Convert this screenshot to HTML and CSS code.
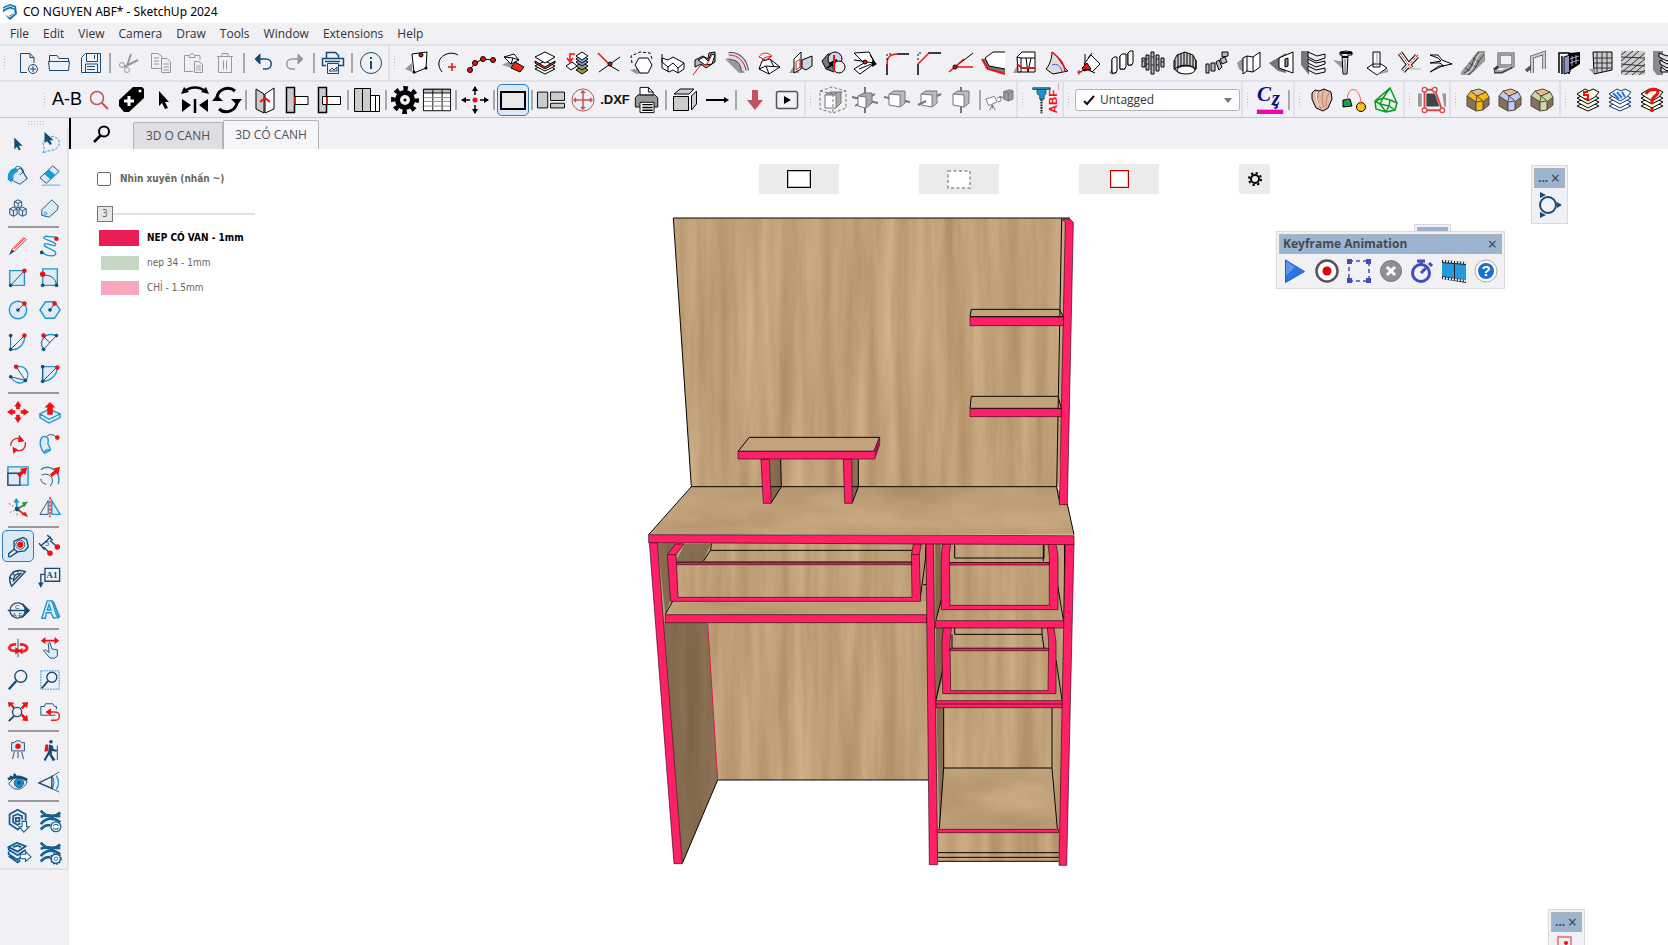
FILE: index.html
```html
<!DOCTYPE html>
<html lang="en">
<head>
<meta charset="utf-8">
<title>CO NGUYEN ABF* - SketchUp 2024</title>
<link rel="stylesheet" href="styles.css">
</head>
<body>
<header class="titlebar">
  <svg class="logo" viewBox="0 0 16 16"><path d="M8 0 14 2l1 8-7 6-5-5 4 1 5-3V6L8 5 1 8V3z" fill="#1273b5"/><path d="M1 5l7-3 5 2M3 7l5-2 4 1v4M3 11l5 2 5-4M8 6v3" stroke="#d5ecfa" stroke-width="1"/></svg>
  <h1>CO NGUYEN ABF* - SketchUp 2024</h1>
</header>
<nav class="menubar">
  <a href="#">File</a><a href="#">Edit</a><a href="#">View</a><a href="#">Camera</a><a href="#">Draw</a><a href="#">Tools</a><a href="#">Window</a><a href="#">Extensions</a><a href="#">Help</a>
</nav>

<div class="row">
  <div class="bar navy"><i class="grip"></i>
    <button aria-label="New"><svg viewBox="0 0 24 24"><path d="M12 21.500H5.500v-19H15l4 4V12M15 2.500v4h4"/><circle cx="18" cy="18" r="4.500"/><path d="M18 15v6M15 18h6"/></svg></button>
    <button aria-label="Open"><svg viewBox="0 0 24 24"><path d="M2.500 10V4.500H10l2 3h9.500V10M1.500 10.500h21l-1 9h-19z"/></svg></button>
    <button aria-label="Save"><svg viewBox="0 0 24 24"><path d="M2.500 6.500l4-4h15v19h-19zM7.500 2.500v8h11v-8M15.500 4v4M6.500 21v-8h12v8M8 15.500h8M8 18.500h8"/></svg></button>
    <i class="sep"></i>
    <button class="dim" aria-label="Cut"><svg viewBox="0 0 24 24"><path d="M14 3l-4 12M21 9L7 16" stroke-width="2"/><circle cx="5" cy="14" r="2.500"/><circle cx="10" cy="19" r="2.500"/></svg></button>
    <button class="dim" aria-label="Copy"><svg viewBox="0 0 24 24"><path d="M12 17.500H2.500v-15H9l4 3V8M12.500 21.500v-14H18l3.500 3.500v10.500zM5 7h5M5 10h5M5 13h5M14.500 13H20M14.500 16H20M14.500 19H20"/></svg></button>
    <button class="dim" aria-label="Paste"><svg viewBox="0 0 24 24"><path d="M12 20.500H3.500v-16H8M14 4.500h5V9M8 6.500v-2l3-2 3 2v2zM13.500 21.500v-11H18l3.500 3v8z"/><path d="M15 14h5v6h-5z" fill="#ccccd4" stroke="none"/></svg></button>
    <button class="dim" aria-label="Delete"><svg viewBox="0 0 24 24"><path d="M4 5.500h16M9 5V2.500h6V5M5.500 6v15.500h13V6M10.500 9.500v9M13.500 9.500v9"/></svg></button>
    <i class="sep"></i>
    <button aria-label="Undo"><svg viewBox="0 0 24 24"><path d="M6 8h9c7 0 7 10 0 10h-3" stroke-width="1.500"/><path d="M4 8l5-5v10z" fill="#174b76"/></svg></button>
    <button class="dim" aria-label="Redo"><svg viewBox="0 0 24 24"><path d="M18 8H9c-7 0-7 10 0 10h3" stroke-width="1.500"/><path d="M20 8l-5-5v10z" fill="#999"/></svg></button>
    <i class="sep"></i>
    <button aria-label="Print"><svg viewBox="0 0 24 24"><path d="M5 14.500H1.500V7.500h21v7H18M5.500 7V1.500h9l3 3V7M4 10.500h15" stroke-width="1.500"/><path d="M6.500 12.500h11v10h-11zM8 20l3-3 2 2 3-3v4z"/></svg></button>
    <i class="sep"></i>
    <button aria-label="Model info"><svg viewBox="0 0 24 24"><circle cx="12" cy="12" r="10.500"/><path d="M12 10v8M12 6v2" stroke-width="2"/></svg></button>
  </div>
  <div class="bar ink"><i class="grip"></i>
    <button aria-label="Face tool"><svg viewBox="0 0 24 24"><path class="s" d="M0 18l7-6v9z"/><path class="w" d="M7 3l15-2-1 16-12 5z"/><circle cx="16" cy="4" r="2" class="rf"/><circle cx="9" cy="21" r="1.500" class="kf"/><circle cx="21" cy="17" r="1.500" class="kf"/></svg></button>
    <button aria-label="Arc centre"><svg viewBox="0 0 24 24"><path d="M21 4C11-2 -5 8 5 21"/><path class="r" d="M15 12v8M11 16h8" stroke-width="1.500"/></svg></button>
    <button class="wide" aria-label="Polyline"><svg viewBox="0 0 28 24"><path d="M2 20l6-8 8-4 10 1"/><g class="rf"><circle cx="3" cy="19" r="2.500"/><circle cx="8" cy="12" r="2.500"/><circle cx="16" cy="8" r="2.500"/><circle cx="26" cy="9" r="2.500"/></g></svg></button>
    <button aria-label="Split solid"><svg viewBox="0 0 24 24"><path class="s" d="M1 14l8-4 8 9z"/><path class="w" d="M3 6l10-3 5 6-8 4z"/><path d="M3 6l9 1 6 2M12 7l-2 6"/><path d="M10 17l4-6 9 5-4 5z" fill="#f52a12"/></svg></button>
    <button aria-label="Layers"><svg viewBox="0 0 24 24"><path class="w" d="M2 18l10-5 10 5-10 5z"/><path class="w" d="M2 15l10-5 10 5-10 5z"/><path d="M2 10l10 6 10-6v2l-10 6-10-6z" fill="#f33"/><path class="w" d="M12 1l10 5-10 6L2 6z"/></svg></button>
    <button aria-label="Move layers"><svg viewBox="0 0 24 24"><path d="M11 19l6-4 6 4-6 4z" fill="#b18c52"/><path d="M11 15l6-4 6 4-6 4z" fill="#75b375"/><path d="M11 11l6-4 6 4-6 4z" fill="#b98be0"/><path d="M11 8l6-4 6 4-6 4z" fill="#65c9ed"/><path class="w" d="M11 5l6-4 6 4-6 4zM1 15l6-4 5 4-6 4z"/><path class="r" d="M10 3H5v6M2 7l3 4 3-4" stroke-width="1.500"/></svg></button>
    <button aria-label="Intersect"><svg viewBox="0 0 24 24"><path class="r" d="M1 2l12 12" stroke-width="1.500"/><path d="M2 21L23 6M12 14l10 6"/><circle class="rf" cx="13" cy="13" r="2"/></svg></button>
    <button aria-label="Hexagon"><svg viewBox="0 0 24 24"><path class="s" d="M1 19l9-2 6 5-9 1z"/><path class="w" d="M10 7h9l4 7-4 8h-8l-5-8z"/><path d="M3 12L2 5l9-4 10 1 2 6" stroke-dasharray="3 2"/></svg></button>
    <button aria-label="Extrude face"><svg viewBox="0 0 24 24"><path class="w" d="M1 7l6 2 5-3 11 6v6l-6 4-5-3-4 2-7-4z"/><path d="M1 11l6 5 5-4 5 5 6-5M1 3v8M7 16v5M17 17v5"/></svg></button>
    <button aria-label="Extrude path"><svg viewBox="0 0 24 24"><path fill="#bbb" d="M2 16V9l8-4 5 3 1-6 6-1v10l-9 6-5-4z"/><path class="w" d="M5 9l6-3 4 4 3-7 4 1-3 9-7 1-4-3z"/><path class="r" d="M0 24l7-9 7-2 5-9"/></svg></button>
    <button aria-label="Pipe"><svg viewBox="0 0 24 24"><path class="s" d="M0 8l8-2 12 16h-6z"/><path d="M4 5c9-1 15 6 16 15" stroke="#555" stroke-width="8"/><path d="M4 5c9-1 15 6 16 15" stroke="#ddd" stroke-width="6"/><path d="M4 4c10 0 15 7 17 15" stroke="#e08"/></svg></button>
    <button aria-label="Dome"><svg viewBox="0 0 24 24"><path class="w" d="M2 18l3-8 8-2 10 8-11 7z"/><path d="M2 18l7-3 14 1M9 15l3 8M13 8l4 8"/><path class="r" d="M2 6c3-5 9-5 13-1L9 9zM5 9c3-4 8-3 10-4"/></svg></button>
    <button aria-label="Project to face"><svg viewBox="0 0 24 24"><path class="s" d="M0 22h10V8z"/><path class="w" d="M5 8l7-7v17l-7 4z"/><path class="r" d="M7 11l4-3v8l-4 3z"/><path d="M13 9l10-4v10l-6 4-4-2z" fill="#ccd6dc"/></svg></button>
    <button aria-label="Boolean"><svg viewBox="0 0 24 24"><path d="M1 10l6-7h6v18l-8-3z" fill="#777"/><circle cx="14" cy="8" r="7" fill="#cdd8e8"/><circle cx="18" cy="16" r="6" fill="#eee"/><path d="M8 13l8-4M6 17l8-5" stroke-width="2"/><path class="r" d="M13 4v17" stroke-width="2"/></svg></button>
    <button aria-label="Convert face"><svg viewBox="0 0 24 24"><path class="w" d="M1 2l15-1 6 11L7 23 1 18l10-6z"/><path d="M1 9l20 3L6 18M17 4l5 8"/><circle class="rf" cx="12" cy="11" r="2"/><path class="kf" d="M19 9l5 4-5 3z"/></svg></button>
    <button aria-label="Fillet"><svg viewBox="0 0 24 24"><path d="M2 24V13M12 3h12" stroke-width="1.500"/><path class="r" d="M2 14C2 7 4 3 13 3" stroke-width="1.500"/><path d="M2 9V3h5" stroke-dasharray="2 2"/></svg></button>
    <button aria-label="Chamfer"><svg viewBox="0 0 24 24"><path d="M1 24V13M11 2h13" stroke-width="1.500"/><path class="r" d="M1 13L12 2" stroke-width="1.500"/><path d="M1 9V2h5" stroke-dasharray="2 2"/></svg></button>
    <button aria-label="Angle"><svg viewBox="0 0 24 24"><path d="M6 16L24 2"/><path class="r" d="M0 21l6-5h18M6 16l9-8" stroke-width="1.500"/><circle class="rf" cx="6" cy="16" r="2"/></svg></button>
    <button aria-label="Edge profile"><svg viewBox="0 0 24 24"><path d="M1 8l4 10 19 4v-6L5 8z" fill="#777" stroke="none"/><path class="w" d="M24 1H12L4 7l4 8 16 3"/><path class="r" d="M1 8l6 10 17 5" stroke-width="2"/></svg></button>
    <button aria-label="Loft"><svg viewBox="0 0 24 24"><path class="s" d="M0 22h7V9z"/><path class="w" d="M4 6l5-5h13v20H5z"/><path d="M8 7h14M8 7v14M13 7l2 14M18 7l-3 14M4 6l4 1"/><path class="r" d="M4 13l5 4h13" stroke-width="2"/></svg></button>
    <button aria-label="Curve surface"><svg viewBox="0 0 24 24"><path d="M7 1C7 8 4 15 1 18l7 5 15-3C17 15 15 7 7 1z" fill="#ddd"/><path class="r" d="M7 1c6 5 12 10 13 19" stroke-width="1.500"/><path d="M7 14c5-2 9 1 10 7" stroke="#35f"/></svg></button>
    <button aria-label="Rotate rectangle"><svg viewBox="0 0 24 24"><path class="w" d="M7 13l7-9 9 9-8 8z"/><path class="rf" d="M5 17l5-5 4 6-7 2z"/><path d="M8 3v10M1 22l8-4 9 4M11 7l4-5"/><path class="r" d="M2 19v5M0 21h5"/></svg></button>
    <button aria-label="Array line"><svg viewBox="0 0 24 24"><path class="s" d="M0 22l4-6v8z"/><path fill="#bbb" d="M3 8h4v14H3zM11 5h5v13h-5zM19 2h4v12h-4z"/><path class="w" d="M3 8l2-2h3v14l-2 2H3zM11 5l2-2h4v13l-2 2h-4zM19 2l2-2h3v12l-2 2h-3z"/></svg></button>
    <button aria-label="Array grid"><svg viewBox="0 0 24 24"><path fill="#bbb" d="M1 7h3v9H1zM5 4h3v15H5zM10 1h3v22h-3zM15 4h3v16h-3zM20 7h3v9h-3z"/><path d="M1 10h2M5 8h3M5 13h3M10 6h3M10 14h3M15 8h3M15 14h3M20 11h3" stroke="#222"/></svg></button>
    <button aria-label="Array circle"><svg viewBox="0 0 24 24"><path fill="#ccc" d="M1 10l3-6 8-3 8 3 3 6v8l-5 4H6l-5-4z"/><path d="M2 9v9M5 4v13M8 3v13M11 1v13M14 2v13M17 3v14M20 5v12M23 9v9M2 18c4-5 16-5 21 0"/><ellipse class="w" cx="13" cy="19" rx="9" ry="4"/></svg></button>
    <button aria-label="Array path"><svg viewBox="0 0 24 24"><path fill="#bbb" d="M1 13h3v9H1zM6 12h4v8H6zM11 11l3-2 3 7-3 3zM15 8l5-2 2 5-5 2zM17 1h6v4l-6 1z"/></svg></button>
    <button aria-label="Fold"><svg viewBox="0 0 24 24"><path class="s" d="M0 12l8-7v17l-6-4z"/><path class="w" d="M6 7l4-2 6 1 7-5v15l-7 5-6-1-4 3z"/><path d="M10 5v15M16 6v15"/></svg></button>
    <button aria-label="Opening"><svg viewBox="0 0 24 24"><path fill="#777" stroke="none" d="M0 12L17 2v20l-8-2z"/><path class="w" d="M10 7l14-6v21l-14-5z"/><path fill="#888" d="M16 8l3-1v8l-3 1z"/></svg></button>
    <button aria-label="Shutter"><svg viewBox="0 0 24 24"><path fill="#777" stroke="none" d="M0 0h8v24L0 14z"/><path fill="#eee" d="M7 1l9 4 8-2v4l-9 3-8-4zM7 8l8 4 9-2v3l-9 3-8-4zM7 15l8 4 9-2v4l-9 2-8-4z"/></svg></button>
    <button aria-label="Screw"><svg viewBox="0 0 24 24"><path class="s" d="M0 9l13 2v10z"/><path d="M7 1l6-1 6 1v3h-4l-1 19h-4L9 4H7z" fill="#ddd"/><path d="M7 2h12M9 6h6" stroke-width="2"/><path d="M12 8v14" stroke="#777"/></svg></button>
    <button aria-label="Column"><svg viewBox="0 0 24 24"><path class="w" d="M2 17l6-4h8l6 4-10 7zM8 1h7v15H8z"/><path class="s" d="M1 19l10 5 12-6v3l-12 3z"/><path d="M12 2v14" stroke="#999"/></svg></button>
    <button aria-label="Crossing pipes"><svg viewBox="0 0 24 24"><path d="M3 2l11 15M20 5L6 20" stroke-width="5"/><path d="M3 2l11 15M20 5L6 20" stroke="#fff" stroke-width="3"/><path class="r" d="M3 2l11 15M21 4L6 20" stroke-dasharray="3 1"/><path d="M13 18h11" stroke="#aaa"/></svg></button>
    <button aria-label="Polyline fold"><svg viewBox="0 0 24 24"><path class="w" d="M1 4h8l4 5 10 4-10 2-12 6 9-6h5l-4-3H1l11-2-3-3z"/></svg></button>
    <button aria-label="Rail"><svg viewBox="0 0 24 24"><path fill="#999" stroke="none" d="M0 21L17 0h7v10L9 24H0z"/><path d="M3 22C13 18 11 6 18 1M7 24C17 18 16 9 23 4M4 17l5 3M8 12l7 4M12 7l6 4" stroke="#444"/><path d="M5 23C15 18 13 7 20 2" stroke="#eee"/></svg></button>
    <button aria-label="Frame"><svg viewBox="0 0 24 24"><path d="M6 3h14v12H6zM1 19l5-4M1 21h8l10-5" stroke="#444" stroke-width="3"/><path d="M6 3h14v12H6zM2 20h6l9-4" stroke="#bbb" stroke-width="1.500"/></svg></button>
    <button aria-label="Arch"><svg viewBox="0 0 24 24"><path d="M7 22V6l12-4v16M1 20l6-5" stroke="#555" stroke-width="3.500"/><path d="M7 22V6l12-4v16" stroke="#ccc" stroke-width="2"/></svg></button>
    <button aria-label="Panels"><svg viewBox="0 0 24 24"><path d="M2 22V2h10v21M5 5v18" stroke-width="1.500"/><path d="M7 6l6-2v17l-6 2z" fill="#8998c0"/><path class="kf" d="M12 2l11-1v12l-11 7z"/><path d="M15 5v10M19 4v9M13 8l9-3M13 12l9-3" stroke="#aac"/></svg></button>
    <button aria-label="Lattice"><svg viewBox="0 0 24 24"><path fill="#ccc" d="M4 1h19v18L5 23z"/><path d="M8 1v21M13 1v20M18 1v19M4 7h19M4 12h19M4 17h19" stroke="#333"/><path class="s" d="M0 18h5v5z"/></svg></button>
    <button aria-label="Roof tiles"><svg viewBox="0 0 24 24"><path fill="#ccc" stroke="none" d="M0 0h24v24H0z"/><path d="M0 4l5-4M0 10L12 0M0 16L18 0M0 22L24 2M4 24L24 8M11 24l13-11M18 24l6-5M0 6l24 1M0 13l24 2M0 20l24 1" stroke="#333"/></svg></button>
    <button aria-label="Rope"><svg viewBox="0 0 24 24"><path fill="#888" stroke="none" d="M0 0h10v24H4l-4-5z"/><path fill="#ddd" d="M6 2l8 3 6-4v5l-6 4-8-4zM7 9l7 4 6-4v4l-6 4-7-4zM8 16l6 4 6-4v5H8z"/></svg></button>
  </div>
</div>

<div class="row second">
  <div class="bar ink"><i class="grip"></i>
    <button class="ab" aria-label="A-B">A-B</button>
    <button aria-label="Search"><svg viewBox="0 0 24 24"><circle cx="10" cy="10" r="6.500" stroke="#c0545a" stroke-width="1.500"/><path d="M15 15l6 6" stroke="#c0545a" stroke-width="2"/></svg></button>
    <button class="big" aria-label="Tag"><svg viewBox="0 0 28 28"><path class="kf" d="M2 14L16 1h9l2 2v9L12 26H7l-5-6z"/><circle cx="23" cy="5" r="2" fill="#fff"/><path d="M12 10v10M7 15h10" stroke="#fff" stroke-width="3"/></svg></button>
    <button aria-label="Select"><svg viewBox="0 0 24 24"><path class="kf" d="M8 3v15l3-3 3 6 3-1-3-6h4z"/></svg></button>
    <button class="big" aria-label="Mirror"><svg viewBox="0 0 28 28"><path class="kf" d="M1 13l9 6-9 7zM27 13l-9 6 9 7z"/><path d="M14 13v14M3 6c6-6 16-6 22 0" stroke-width="2.500"/><path class="kf" d="M0 8l3-7 5 5zM28 8l-3-7-5 5z"/></svg></button>
    <button class="big" aria-label="Rotate"><svg viewBox="0 0 28 28"><path d="M4 11a11 11 0 0 1 18-6M24 17a11 11 0 0 1-18 6" stroke-width="3"/><path class="kf" d="M-1 15l5-6 6 6zM18 13l6 6 5-6z"/></svg></button>
    <i class="sep"></i>
    <button class="big" aria-label="Book"><svg viewBox="0 0 28 28"><path fill="#ccc" d="M5 3l8 5v19l-8-4z"/><path class="w" d="M23 2l-9 6v19l9-4z"/><path class="r" d="M9 16l5-4 5 4" stroke-width="2"/></svg></button>
    <button class="big" aria-label="Joint left"><svg viewBox="0 0 28 28"><path fill="#ccc" d="M3.500 1.500h8v25h-8z" stroke-width="1.500"/><path class="w" d="M12 10.500h13v8H12z"/><path class="r" d="M12 11v7" stroke-width="2"/></svg></button>
    <button class="big" aria-label="Joint through"><svg viewBox="0 0 28 28"><path fill="#ccc" d="M3.500 1.500h8v25h-8z" stroke-width="1.500"/><path class="w" d="M7.500 10.500h18v8h-18z"/><path class="r" d="M12 11v7" stroke-width="2"/></svg></button>
    <i class="sep"></i>
    <button class="big" aria-label="Panels list"><svg viewBox="0 0 28 28"><path fill="#ccc" d="M1.500 2.500h8v23h-8zM9.500 2.500h8v23h-8z"/><path class="w" d="M17.500 9.500h5v16h-5zM22.500 9.500h4v16h-4z"/></svg></button>
    <i class="sep"></i>
    <button class="big" aria-label="Settings"><svg viewBox="0 0 28 28"><circle cx="14" cy="14" r="7.500" stroke-width="5"/><circle cx="14" cy="14" r="11.500" stroke-width="5" stroke-dasharray="4.500 4.530" stroke-dashoffset="2"/><circle class="kf" cx="14" cy="14" r="1.500"/></svg></button>
    <button class="big" aria-label="Table"><svg viewBox="0 0 30 28"><path class="w" d="M.5 2.500h29v23H.5z"/><path fill="#bbb" d="M.5 2.500h29v4H.5z"/><path d="M10.500 3v22M20.500 3v22"/><path d="M1 11.500h28M1 15.500h28M1 20.500h28" stroke="#888"/></svg></button>
    <i class="sep"></i>
    <button class="big" aria-label="Move"><svg viewBox="0 0 28 28"><path d="M1 14h8M19 14h8M14 1v8M14 19v8" stroke-width="1.500"/><path class="kf" d="M0 14l5-3v6zM28 14l-5-3v6zM14 0l3 5h-6zM14 28l3-5h-6z"/><circle class="rf0" cx="14" cy="14" r="2.500"/></svg></button>
    <i class="sep"></i>
    <button class="big active" aria-label="Rectangle"><svg viewBox="0 0 28 28"><path fill="#e9e9e9" d="M2 6h24v17H2z" stroke-width="2"/></svg></button>
    <i class="sep"></i>
    <button class="big" aria-label="Layout"><svg viewBox="0 0 30 28"><path fill="#ccc" d="M.5 5.500h11v17H.5zM14.500 5.500h15v9h-15zM14.500 17.500h15v5h-15z"/></svg></button>
    <button aria-label="Crosshair"><svg viewBox="0 0 24 24"><g stroke="#c0545a"><circle cx="12" cy="12" r="11"/><path d="M12 3v18M3 12h18M10 5l2-2 2 2M10 19l2 2 2-2M5 10l-2 2 2 2M19 10l2 2-2 2" stroke-width="1.500"/></g></svg></button>
    <button class="dxf" aria-label="Export DXF">.DXF</button>
    <button class="big" aria-label="Print sheet"><svg viewBox="0 0 28 30"><path fill="#999" d="M1.500 12.500l3-3h18l3 3v10h-24z"/><path class="w" d="M6.500 9.500v-8h9l5 5v3zM15.500 1.500v5h5M6.500 17.500h15v11h-15z"/><path d="M9 20h11M9 23h11M9 26h11" stroke-width="1.500"/></svg></button>
    <i class="sep"></i>
    <button class="big" aria-label="Box"><svg viewBox="0 0 28 28"><path fill="#ccc" d="M2.500 10.500h15v14h-15zM3 8l6-5h14l-5 5zM20.500 10l5-5v13l-5 6z"/></svg></button>
    <button class="big" aria-label="Arrow"><svg viewBox="0 0 28 28"><path d="M3 14h20" stroke-width="2"/><path class="kf" d="M21 11l5 3-5 3z"/></svg></button>
    <i class="sep"></i>
    <button aria-label="Import"><svg viewBox="0 0 24 24"><path fill="#c0545a" stroke="none" d="M9 2h6v10h5l-8 10-8-10h5z"/></svg></button>
    <button aria-label="Play"><svg viewBox="0 0 24 24"><rect x="1.500" y="3.500" width="21" height="17" rx="2" stroke="#555" stroke-width="1.500"/><path class="kf" d="M9 8l7 4-7 4z"/></svg></button>
  </div>
  <div class="bar cube"><i class="grip"></i>
    <button class="big" aria-label="Scale all"><svg viewBox="0 0 28 28"><path fill="#aaa" d="M6 9l5-3h11v11l-5 5z"/><path class="w" d="M6 9h11v13H6z"/><path d="M1 5l12-4 14 4v17l-13 5-13-4zM1 5l13 3 13-3M14 8v19" stroke-dasharray="3 2"/></svg></button>
    <button class="big" aria-label="Scale handles"><svg viewBox="0 0 28 28"><path d="M14 1v26M1 11l26 6M4 20L24 8" stroke-width="2"/><path fill="#aaa" d="M7 10l6-3h8v10l-6 5z"/><path class="w" d="M7 10l8 1v11l-8-2z"/></svg></button>
    <button class="big" aria-label="Scale X"><svg viewBox="0 0 28 28"><path d="M1 11l26 5" stroke-width="2"/><path fill="#bbb" d="M6 8l5-3h11v12l-5 4z"/><path class="w" d="M6 8l11 1v12L6 19z"/></svg></button>
    <button class="big" aria-label="Scale Y"><svg viewBox="0 0 28 28"><path d="M22 10l4-2" stroke-width="2"/><path fill="#bbb" d="M6 8l5-3h11v12l-5 4z"/><path class="w" d="M6 8l11 1v12L6 19z"/><path d="M3 19l8-4" stroke-width="2"/></svg></button>
    <button class="big" aria-label="Scale Z"><svg viewBox="0 0 28 28"><path d="M14 1v26" stroke-width="2"/><path fill="#bbb" d="M6 8l5-3h11v12l-5 4z"/><path class="w" d="M6 8l11 1v12L6 19z"/></svg></button>
    <i class="sep"></i>
    <button class="big" aria-label="Camera to box"><svg viewBox="0 0 30 28"><path class="w" d="M1 13l9-3 3 6-9 4zM13 12l4-2v5l-3 1M8 19l-3 6M8 19l3 6M8 19v4"/><path fill="#999" d="M20 5l6-2 4 1v9l-5 2-5-2z"/><path d="M15 11h5M20 5l5 2v8M25 7l5-2"/></svg></button>
  </div>
  <div class="bar"><i class="grip"></i>
    <button class="big" aria-label="ABF"><svg viewBox="0 0 30 32"><path d="M1 2h20v2H1zM6 4h10v5l-2 2v4h-5v-4L6 9z" fill="#1b95cf" stroke="#345"/><path d="M11 15v16" stroke="#222" stroke-width="2.500" stroke-dasharray="2 1"/><text class="abf" transform="translate(29 31) rotate(-90)">ABF_</text></svg></button>
  </div>
  <div class="bar"><i class="grip"></i>
    <label class="tagbox"><svg viewBox="0 0 12 12"><path d="M1 7l3 3 7-8" stroke="#111" stroke-width="2"/></svg>
      <select aria-label="Tag"><option>Untagged</option></select><i class="caret"></i></label>
  </div>
  <div class="bar"><i class="grip"></i>
    <button class="big" aria-label="Cz"><svg viewBox="0 0 30 32"><text class="cz" x="0" y="17">C</text><text class="cz" x="17" y="22">z</text><path d="M19 22c6-1 5 4 1 3" stroke="#10108a" stroke-width="2"/><path fill="#f500b8" d="M0 27h30v5H0z"/></svg></button>
    <i class="sep"></i>
  </div>
  <div class="bar ink"><i class="grip"></i>
    <button aria-label="Shell"><svg viewBox="0 0 24 24"><path d="M2 5l3-3 4 1 5-2 7 3 1 7-4 9-5 3-7-3-4-9z" fill="#e9b9a8"/><path d="M9 4c-3 5-1 12 2 17M14 2c-3 7-2 12 0 18M19 5c-3 5-3 10-3 14" stroke="#b77d6c"/><path d="M7 4c-2 5 0 10 2 14" stroke="#fff"/></svg></button>
    <button aria-label="Link shapes"><svg viewBox="0 0 24 24"><path d="M1 12l7-1 2 7-9 1z" fill="#11a051"/><circle cx="19" cy="19" r="4.500" fill="#fdc514"/><path d="M5 14C5-4 19-2 19 17" stroke="#f55"/></svg></button>
    <button aria-label="Green gem"><svg viewBox="0 0 24 24"><g stroke="#0a9e1d" stroke-width="1.500"><path d="M16 0l7 15-2 7-9 2-10-3-1-8zM1 13l8-3 7 2 7 3M9 10l7-10M9 10l-3 6 6 8M6 16l-5-3M6 16l9 2 1-6M15 18l6 4M15 18l-3 6"/></g></svg></button>
  </div>
  <div class="bar"><i class="grip"></i>
    <button class="big" aria-label="Trapezoid"><svg viewBox="0 0 30 28"><path fill="#999" d="M0 7h4v14H0zM26 7h4v14h-2z"/><path fill="#444" d="M9 7h9l5 14H9z"/><g stroke="#df4646" stroke-width="2"><path d="M7 3h11l8 22H7z"/><g fill="#fff" stroke-width="1.500"><circle cx="7" cy="3" r="2.500"/><circle cx="18" cy="3" r="2.500"/><circle cx="7" cy="25" r="2.500"/><circle cx="26" cy="25" r="2.500"/></g></g></svg></button>
  </div>
  <div class="bar edge"><i class="grip"></i>
    <button aria-label="Bevel"><svg viewBox="0 0 24 24"><path fill="#85725b" d="M1 8l9 6v9l-9-5z"/><path fill="#85725b" d="M17 13l6-4v8l-6 5z"/><path fill="#f6b90f" d="M1 8l4-5 6 5 9-4 3 5-6 5v8l-7 1v-9z"/><path fill="#e3bc8f" d="M5 3l8-2 7 3-9 4z"/><path d="M11 8l-1 6 7-1-6-5"/></svg></button>
    <button aria-label="Bevel blue"><svg viewBox="0 0 24 24"><path fill="#85725b" d="M1 8l9 6v9l-9-5z"/><path fill="#85725b" d="M17 13l6-4v8l-6 5z"/><path fill="#bccbfa" d="M1 8l4-5 6 5 9-4 3 5-6 5v8l-7 1v-9z"/><path fill="#e3bc8f" d="M5 3l8-2 7 3-9 4z"/><path d="M11 8l-1 6 7-1-6-5"/></svg></button>
    <button aria-label="Bevel green"><svg viewBox="0 0 24 24"><path fill="#85725b" d="M1 8l9 6v9l-9-5z"/><path fill="#85725b" d="M17 13l6-4v8l-6 5z"/><path fill="#c4dba6" d="M1 8l4-5 6 5 9-4 3 5-6 5v8l-7 1v-9z"/><path fill="#e3bc8f" d="M5 3l8-2 7 3-9 4z"/><path d="M11 8l-1 6 7-1-6-5"/></svg></button>
  </div>
  <div class="bar ink"><i class="grip"></i>
    <button aria-label="Sheets"><svg viewBox="0 0 24 24"><g fill="#fffbe8"><path d="M1 18l11-5 11 5-11 5z"/><path d="M1 14l11-5 11 5-11 6z"/><path d="M1 10l11-5 11 5-11 6z"/><path d="M1 6l8-5 4 2 4-2 6 3-4 5-7 4z"/></g><path class="r" d="M12 4H8v3h4v4H8" stroke-width="2"/></svg></button>
    <button aria-label="Sheets blue"><svg viewBox="0 0 24 24"><g fill="#fff" stroke="#137"><path d="M1 18l11-5 11 5-11 5z"/><path d="M1 14l11-5 11 5-11 6z"/><path d="M1 10l11-5 11 5-11 6z"/><path d="M1 6l8-5 4 2 4-2 6 3-4 5-7 4z"/></g><path d="M5 5l6 6M9 4l5 6M14 4l3 5" stroke="#2173e6" stroke-width="2"/></svg></button>
    <button aria-label="Sheets help"><svg viewBox="0 0 24 24"><g fill="#fffbe8"><path d="M1 18l11-5 11 5-11 5z"/><path d="M1 14l11-5 11 5-11 6z"/><path d="M1 10l11-5 11 5-11 6z"/><path d="M1 6l8-5 4 2 4-2 6 3-4 5-7 4z"/></g><path class="r" d="M6 6c3-6 12-6 12-2 0 4-6 4-6 9v3M12 20v4" stroke-width="3"/></svg></button>
  </div>
</div>

<main>
  <aside class="palette">
    <i class="grip-h"></i>
    <div class="tools">
      <button aria-label="Select"><svg viewBox="0 0 24 24"><path class="nf" d="M8 5v13l3-3 2 4 2-1-2-4h4z"/></svg></button>
      <button aria-label="Lasso"><svg viewBox="0 0 24 24"><path class="c" d="M13 4c8-1 12 7 7 12-4 4-9 2-16 6 4-6-1-9 1-14" stroke-dasharray="3 1.500"/><path class="nf" d="M6-1v12l3-2 3 4 2-1-2-4h4z"/></svg></button>
      <button aria-label="Paint"><svg viewBox="0 0 24 24"><path class="p" d="M7 8l8-5 7 12-8 6-8-4z"/><path fill="#0f9ddc" stroke="none" d="M10 3C3 4 0 9 1 16l4 3 1-8 6-4z"/><path d="M9 3c2-3 8-1 9 4l-4 4M15 3l7 12"/></svg></button>
      <button aria-label="Eraser"><svg viewBox="0 0 24 24"><path class="p" d="M1 14L15 1l7 6L8 20z"/><path fill="#0f9ddc" stroke="none" d="M6 10l5-5 7 6-5 5z"/><path d="M3 22h20" stroke="#7dc6e9" stroke-width="1.500"/></svg></button>
      <button aria-label="Components"><svg viewBox="0 0 24 24"><path class="p" d="M12 3l4 2v5l-4 2-4-2V5zM7 11l4 2v6l-4 2-4-2v-6zM17 11l4 2v6l-4 2-4-2v-6z"/><path d="M8 5l4 2 4-2M12 7v5M3 13l4 2 4-2M7 15v6M13 13l4 2 4-2M17 15v6"/></svg></button>
      <button aria-label="Tag tool"><svg viewBox="0 0 24 24"><path class="p" d="M3 14L14 3l7 7-1 4-9 8-8-2z"/><circle class="c" cx="7" cy="18" r="1.500"/></svg></button>
      <i class="rule"></i>
      <button aria-label="Line"><svg viewBox="0 0 24 24"><path stroke="#e22" fill="#fde6e2" d="M5 16L18 3l3 2L8 18z"/><path d="M8 15L19 4" stroke="#e22"/><path class="nf" d="M2 22l3-6 3 2z"/></svg></button>
      <button aria-label="Freehand"><svg viewBox="0 0 24 24"><path class="c2" d="M4 19c5 5 16 5 14 0-1-4-14-5-12-9 2-3 10 4 12 1 2-4-16-6-12-9 2-2 8 1 12 0"/><circle class="nf" cx="3" cy="19" r="2"/><circle class="rf0" cx="19" cy="4" r="2.500"/></svg></button>
      <button aria-label="Rectangle"><svg viewBox="0 0 24 24"><path class="pc" d="M3 4h16v16H3z"/><path d="M4 20L19 4"/><circle class="nf" cx="4" cy="20" r="2"/><circle class="rf0" cx="19" cy="4" r="2.500"/></svg></button>
      <button aria-label="Rotated rectangle"><svg viewBox="0 0 24 24"><path class="pc" d="M4 2h16v18H4z"/><path d="M4 9c8-1 14 3 15 10"/><circle class="nf" cx="4" cy="20" r="2"/><circle class="nf" cx="19" cy="20" r="2"/><circle class="rf0" cx="4" cy="8" r="3"/></svg></button>
      <button aria-label="Circle"><svg viewBox="0 0 24 24"><circle class="pc" cx="12" cy="12" r="9.500"/><path d="M12 12l7-7"/><circle class="nf" cx="12" cy="12" r="2"/><circle class="rf0" cx="19" cy="5" r="2.500"/></svg></button>
      <button aria-label="Polygon"><svg viewBox="0 0 24 24"><path class="pc" d="M7 3h10l6 9-6 9H7l-6-9z"/><path d="M12 12l5-7"/><circle class="nf" cx="12" cy="12" r="2"/><circle class="rf0" cx="17" cy="5" r="2.500"/></svg></button>
      <button aria-label="Arc"><svg viewBox="0 0 24 24"><path class="c2" d="M4 20c8 2 16-6 15-15"/><path d="M4 5v15L19 5"/><circle class="nf" cx="4" cy="5" r="2"/><circle class="nf" cx="4" cy="20" r="2"/><circle class="rf0" cx="19" cy="5" r="2.500"/></svg></button>
      <button aria-label="Two point arc"><svg viewBox="0 0 24 24"><path class="c2" d="M5 20C-1 13 5 0 19 5"/><path d="M5 20L19 5M4 5l8 8"/><circle class="nf" cx="5" cy="20" r="2"/><circle class="nf" cx="19" cy="5" r="2"/><circle class="rf0" cx="5" cy="5" r="2.500"/></svg></button>
      <button aria-label="Three point arc"><svg viewBox="0 0 24 24"><path class="c2" d="M10 4c12-2 16 10 10 15-4 5-12 3-16-4"/><path d="M10 4l10 15-16-4"/><circle class="nf" cx="4" cy="15" r="2"/><circle class="nf" cx="20" cy="19" r="2"/><circle class="rf0" cx="10" cy="4" r="2.500"/></svg></button>
      <button aria-label="Pie"><svg viewBox="0 0 24 24"><path class="pc" d="M4 4h16c0 9-7 16-16 16z"/><path d="M4 4v16L20 4"/><circle class="nf" cx="4" cy="4" r="2"/><circle class="nf" cx="4" cy="20" r="2"/><circle class="rf0" cx="20" cy="5" r="2.500"/></svg></button>
      <i class="rule"></i>
      <button aria-label="Move"><svg viewBox="0 0 24 24"><path class="rf0" d="M12 0l4 6h-2v3h-4V6H8zM12 24l4-6h-2v-3h-4v3H8zM0 12l6-4v2h3v4H6v2zM24 12l-6-4v2h-3v4h3v2z"/></svg></button>
      <button aria-label="Push pull"><svg viewBox="0 0 24 24"><path class="pc" d="M1 14l10-5 12 5-12 6zM1 14v4l10 6 12-6v-4"/><path class="rf0" d="M12 1l6 6h-3v8H9V7H6z"/></svg></button>
      <button aria-label="Rotate"><svg viewBox="0 0 24 24"><path stroke="#e22" stroke-width="1.500" d="M4 14c0-6 6-10 11-7M20 10c1 7-5 12-11 8"/><path class="rf0" d="M13 2l6 7-7 1zM6 15l6 3-5 5z"/></svg></button>
      <button aria-label="Follow me"><svg viewBox="0 0 24 24"><path class="pc" d="M3 5c3-3 8 0 7 4-2 5 4 6 2 10l-6 3C1 17 0 9 3 5zM6 22c0-3 3-5 6-3"/><path d="M8 4c4-4 9-2 11 1"/><circle class="rf0" cx="20" cy="5" r="2.500"/></svg></button>
      <button aria-label="Scale"><svg viewBox="0 0 24 24"><path class="pc" d="M1 2h22v20H1z"/><path class="p" d="M1 9h13v13H1z" stroke-width="1.500"/><path class="rf0" d="M11 10l5-4-2-2 8-1-2 8-2-2-4 5z"/></svg></button>
      <button aria-label="Offset"><svg viewBox="0 0 24 24"><path class="c2" d="M2 5C12-2 25 8 21 21"/><path d="M3 11c8-4 16 5 9 12M8 21c-4-1-6-3-6-6"/><path class="rf0" d="M12 10l5-4-2-2 8-2-2 9-2-2-5 4z"/></svg></button>
      <button aria-label="Axes"><svg viewBox="0 0 24 24"><path d="M11 13L10 3" stroke="#1c96d2" stroke-width="2"/><path fill="#1c96d2" stroke="none" d="M7 6l3-5 4 5z"/><path d="M11 13l9-5" stroke="#3a954a" stroke-width="2"/><path fill="#3a954a" stroke="none" d="M16 6l7-1-4 6z"/><path d="M11 13l8 6" stroke="#e22" stroke-width="2"/><path class="rf0" d="M16 19l4-3 3 6z"/><path d="M2 7l8 5" stroke="#e22" stroke-dasharray="2 2"/><path d="M3 17l8-4M11 14v8" stroke="#3a954a" stroke-dasharray="2 2"/><circle class="nf" cx="11" cy="13" r="2.500"/></svg></button>
      <button aria-label="Flip"><svg viewBox="0 0 24 24"><path d="M10 4v15H1z"/><path class="pc" d="M14 4v15h9z"/><path d="M12 0v22" stroke="#e22" stroke-width="1.500" stroke-dasharray="3 1"/></svg></button>
      <i class="rule"></i>
      <button class="big active" aria-label="Tape measure"><svg viewBox="0 0 28 28"><path class="p" d="M9 8l10-4 4 2 2 8-4 5-8 1-4-3z" stroke-width="1.500"/><path d="M13 20L4 26M9 17l-6 5v4" stroke-width="1.500"/><circle cx="16" cy="12" r="5" fill="#fff"/><circle class="rf0" cx="16" cy="12" r="3.500"/></svg></button>
      <button aria-label="Dimension"><svg viewBox="0 0 24 24"><path d="M2 12L13 2M0 9l6 7M9 0l6 6M5 13l7 7M12 6l8 7" stroke-width="1.500"/><text class="tiny" x="7" y="12">5</text><circle class="rf0" cx="12" cy="20" r="3"/><circle class="rf0" cx="20" cy="13" r="3"/></svg></button>
      <button aria-label="Protractor"><svg viewBox="0 0 24 24"><path d="M5 21C-1 9 7 1 20 5zM7 15c0-5 3-8 8-8z" stroke-width="1.500"/><path d="M3 12l3 1M6 7l2 2M12 4v2" stroke-width="1.500"/></svg></button>
      <button aria-label="Text"><svg viewBox="0 0 24 24"><path d="M6.500 1.500h16v14h-16zM6 8H2v12" stroke-width="1.500"/><path class="nf" d="M-1 17h6l-3 6z"/><text class="a1" x="8" y="12">A1</text></svg></button>
      <button class="big" aria-label="Section"><svg viewBox="0 0 28 28"><circle cx="13" cy="14" r="8.500" stroke-width="1.500"/><path d="M2 14h23M18 6l8 8-8 8" stroke-width="1.500"/><path class="nf" d="M21 10l6 4-6 4z"/><text class="tiny" x="10" y="12">C</text><text class="tiny" x="7" y="21">A-E</text></svg></button>
      <button aria-label="3D text"><svg viewBox="0 0 24 24"><path class="pc" d="M3 21L9 2h5l6 18-4 1-3-6H8l-1 6zM9 12h4l-2-6z"/><path d="M14 2l2 2 6 15-2 2" stroke="#1c96d2" stroke-width="2"/></svg></button>
      <i class="rule"></i>
      <button aria-label="Orbit"><svg viewBox="0 0 24 24"><path d="M12 2v20"/><path d="M10 8c-9 0-10 7-2 7h4M14 8c9 0 11 6 3 8" stroke="#e22" stroke-width="3"/><path class="rf0" d="M9 11l6 4-6 4zM17 12v7l-5-4z"/></svg></button>
      <button aria-label="Pan"><svg viewBox="0 0 24 24"><path class="p" d="M10 7l2-1 2 7 6 1v7l-3 2h-5l-7-8 2-1 4 3z"/><path class="rf0" d="M2 4l5-4v3h10V0l5 4-5 4V5H7v3z"/></svg></button>
      <button aria-label="Zoom"><svg viewBox="0 0 24 24"><circle cx="15" cy="8" r="6.500" stroke-width="1.500"/><path d="M10 13l-8 9" stroke-width="2.500"/></svg></button>
      <button aria-label="Zoom window"><svg viewBox="0 0 24 24"><path class="c" stroke-dasharray="2 1" d="M2 2h20v20H2z"/><circle cx="14" cy="9" r="5.500" stroke-width="1.500"/><path d="M10 13l-7 8" stroke-width="2"/></svg></button>
      <button aria-label="Zoom extents"><svg viewBox="0 0 24 24"><circle cx="11" cy="12" r="5" stroke-width="1.500"/><path d="M8 16l-6 6" stroke-width="2"/><path class="rf0" d="M1 1l7 1-2 2 3 3-2 2-3-4-2 2zM23 1l-7 1 2 2-3 3 2 2 3-3 2 2zM23 22l-7-1 2-2-3-3 2-2 3 3 2-2z"/></svg></button>
      <button aria-label="Previous view"><svg viewBox="0 0 24 24"><path d="M18 15.500H2V6h4l1-3h8l2 3h2v3" /><path d="M11 12h6c7 0 7 9 0 9h-4" stroke="#e22" stroke-width="1.500"/><path class="rf0" d="M7 12l6-4v8z"/></svg></button>
      <i class="rule"></i>
      <button aria-label="Position camera"><svg viewBox="0 0 24 24"><path class="p" d="M5 4h3l2-2h4l2 2h3v9H5z"/><path d="M8 14L6 22M16 14l2 8M12 14v7"/><circle class="rf0" cx="12" cy="8" r="3"/></svg></button>
      <button aria-label="Walk"><svg viewBox="0 0 24 24"><circle class="nf" cx="13" cy="3" r="2"/><path class="nf" d="M11 6l4 1 1 4 4 1-1 2-5-1v4l4 6-3 1-4-7-4 7-2-1 5-9z"/><path class="rf0" d="M7 6h3v7l-4 1z"/><path d="M20 7v16"/></svg></button>
      <button aria-label="Look around"><svg viewBox="0 0 24 24"><path class="p" d="M2 14c5-9 15-9 20-2-4 9-14 11-20 2z"/><circle fill="#1c96d2" cx="13" cy="13" r="5"/><circle class="nf" cx="13" cy="13" r="2"/><path d="M1 9c6-3 14-4 21 1M3 6l3 2M8 3l1 4" stroke-width="3"/></svg></button>
      <button aria-label="Field of view"><svg viewBox="0 0 24 24"><path d="M0 13L14 6v13z" stroke-width="1.500"/><path d="M14 5c3 5 3 10 0 15M14 6l8-5M14 19l8 4"/><path class="c2" d="M19 5c3 5 3 10 0 15"/></svg></button>
      <i class="rule"></i>
      <button class="big" aria-label="Warehouse"><svg viewBox="0 0 28 28"><g stroke="#155f94" stroke-width="2"><path d="M22 14V7l-9-5-9 5v11l9 6 3-2M18 13V9l-5-2-5 2v7l5 3 3-2M11 11h4v4h-4z"/><path fill="#fff" stroke-width="1.200" d="M18 15h5v6h3l-6 6-5-6h3z"/></g></svg></button>
      <button class="big" aria-label="Extension warehouse"><svg viewBox="0 0 28 28"><g stroke="#155f94" stroke-width="3"><path d="M3 3c7 8 15 8 22 2M3 10c7-4 14 0 22-1M3 18c7-8 14-8 22-2M3 24c5-5 7-5 11-5"/><circle cx="20" cy="21" r="5.500" stroke-width="1.500" fill="#fff"/><path stroke-width="1.200" d="M17 20c2-3 5-2 6 0M23 22c-2 3-5 2-6 0"/></g></svg></button>
      <button class="big" aria-label="Share model"><svg viewBox="0 0 28 28"><g stroke="#155f94" stroke-width="2"><path d="M3 8l9-5 10 4-9 6zM3 8v3l10 6 9-6M3 13v3l10 6 3-2M3 18l10 7 3-2M8 8l5-2 4 2"/><path fill="#fff" stroke-width="1.200" d="M16 16h6v-3l6 6-6 5v-3h-6z"/></g></svg></button>
      <button class="big" aria-label="Extension manager"><svg viewBox="0 0 28 28"><g stroke="#155f94" stroke-width="3"><path d="M3 3c7 8 15 8 22 2M3 10c7-4 14 0 22-1M3 18c7-8 14-8 22-2M3 24c5-5 7-5 11-5"/><circle cx="20" cy="21" r="5" stroke-width="1.500" fill="#fff"/><circle cx="20" cy="21" r="6" stroke-width="1.500" stroke-dasharray="2 1.500"/><circle cx="20" cy="21" r="2" stroke-width="1"/></g></svg></button>
    </div>
  </aside>

  <section class="workspace">
    <div class="scenes">
      <button class="find" aria-label="Search scenes"><svg viewBox="0 0 18 18"><circle cx="11" cy="6.500" r="5" stroke="#000" stroke-width="2"/><path d="M8 10l-7 7" stroke="#000" stroke-width="2.500"/></svg></button>
      <button class="tab">3D O CANH</button>
      <button class="tab current">3D CÓ CANH</button>
    </div>
    <div class="viewport">
      <svg class="model" viewBox="0 0 1350 2040" role="img" aria-label="Desk model">
        <defs>
          <filter id="grain" x="0" y="0" width="1350" height="2040" filterUnits="userSpaceOnUse" color-interpolation-filters="sRGB">
            <feTurbulence type="fractalNoise" baseFrequency=".022 .0014" numOctaves="5" seed="7"/>
            <feColorMatrix values=".17 0 0 0 .665  .19 0 0 0 .530  .20 0 0 0 .370  0 0 0 0 1"/>
            <feComposite in2="SourceGraphic" operator="in"/>
          </filter>
          <filter id="flat" x="0" y="800" width="1350" height="1240" filterUnits="userSpaceOnUse" color-interpolation-filters="sRGB">
            <feTurbulence type="fractalNoise" baseFrequency=".003 .010" numOctaves="4" seed="3"/>
            <feColorMatrix values=".15 0 0 0 .670  .16 0 0 0 .540  .17 0 0 0 .380  0 0 0 0 1"/>
            <feComposite in2="SourceGraphic" operator="in"/>
          </filter>
        </defs>
        <g filter="url(#grain)" fill="#c2a178" stroke="none">
          <path d="M100 54H1290L1256 862H154z"/>
          <path d="M50 1028H1300L1260 1984H890V1740H233L127 1990z"/>
        </g>
        <g filter="url(#flat)" fill="#c2a178" stroke="none">
          <path d="M154 860H1250L1282 912 1302 1004H26z"/>
          <path d="M76 1244L98 1204H860V1244zM912 1704H1236L1252 1886H898z"/>
        </g>
        <path d="M994 328H1258L1270 350H990zM994 589H1254L1264 625H990zM328 712H719L702 754H294z" fill="#c2a27a"/>
        <g fill="#3d2d1c" fill-opacity=".45" stroke="none">
          <path d="M72 1268H202L233 1740 127 1990z"/>
          <path d="M52 1030H126L82 1064 92 1198 76 1242zM886 1032H902L906 1200 886 1260zM888 1284H910L906 1440 888 1500zM890 1524H911V1704L898 1886z"/>
          <path d="M134 1032H212L190 1084H108zM389 778H422L424 860 394 908zM635 778H655V860L637 908z"/>
        </g>
        <g fill="none" stroke="#050402" stroke-width="3">
          <path d="M100 54H1290M100 54L154 860H1250M154 860L26 1004M1265 58L1250 862 1260 912M1282 912L1302 1004"/>
          <path d="M994 328H1258L1270 350H990zM994 589H1254L1264 625H990zM328 712H719L702 754H294z"/>
          <path d="M422 778L424 860 394 908M655 778V860L637 908M233 1740H866M233 1740L127 1990"/>
          <path d="M214 1030L212 1050 190 1084M212 1051H816M110 1086H816M98 1204L76 1242M858 1032L856 1080 840 1200M850 1154H858"/>
          <path d="M944 1032V1074H1212V1032M1210 1032V1084M930 1088H1228M904 1200L888 1260M1252 1150L1270 1260M1274 1032L1272 1260"/>
          <path d="M944 1284V1303H1206V1284M1206 1303L1212 1345M936 1303V1345H1220M910 1400L888 1500M1248 1380L1266 1500"/>
          <path d="M911 1524V1704H1236V1524M911 1704L898 1886M1236 1704L1252 1886M892 1958H1256M892 1972H1256M892 1984H1256"/>
        </g>
        <g fill="#ff2168" stroke="#300812" stroke-width="2">
          <path d="M1265 57H1290L1300 67 1282 914H1258L1276 67z"/>
          <path d="M990 351H1270V377H990zM990 626H1264V650H990z"/>
          <path d="M294 754H702L719 712V734L704 777H294z"/>
          <path d="M363 778H388L394 910H370zM610 778H635L637 910H614z"/>
          <path d="M28 1028H52L127 1991H102zM76 1244H860V1268H76z"/>
          <path d="M82 1064L106 1032H132L108 1064 114 1192H816L814 1064 820 1032H844L838 1064 842 1204H92zM108 1064H82M814 1064H838M110 1088H816V1094H110z"/>
          <path d="M904 1066L908 1032H932L928 1066 930 1216H1228V1066L1224 1032H1248L1254 1066V1229H904zM930 1088H1228V1095H930z"/>
          <path d="M886 1262H1272V1284H886z"/>
          <path d="M906 1326L910 1284H934L930 1326 932 1472H1224L1226 1326 1222 1284H1242L1248 1326V1481H908zM930 1345H1226V1352H930z"/>
          <path d="M888 1502H1268V1523H888zM888 1512H1268M890 1888H1256V1898H890z"/>
          <path d="M858 1030H880L893 1994H868zM1276 1030H1302L1280 1996H1257z"/>
          <path d="M26 1004L1302 1007V1034L26 1028z"/>
        </g>
        <path d="M203 1270L233 1738" stroke="#d51a50" stroke-width="3"/>
        <path d="M704 752L719 714V734L704 776z" fill="#a31247"/>
      </svg>

      <div class="legend">
        <label class="xray"><input type="checkbox"> Nhìn xuyên (nhấn ~)</label>
        <div class="slider"><input id="level" type="range" min="3" max="20" value="3" aria-label="Thickness"><output for="level">3</output></div>
        <ul>
          <li class="picked"><i class="swatch red"></i>NEP CÓ VAN - 1mm</li>
          <li><i class="swatch green"></i>nep 34 - 1mm</li>
          <li><i class="swatch pink"></i>CHỈ - 1.5mm</li>
        </ul>
      </div>

      <div class="modes">
        <button aria-label="Solid outline"><i class="shape"></i></button>
        <button aria-label="Dashed outline"><svg class="dash" viewBox="0 0 24 19"><path d="M1 1h22v17H1z" fill="#fff" stroke="#aaa" stroke-width="2" stroke-dasharray="3 2.500"/></svg></button>
        <button aria-label="Red outline"><i class="shape square"></i></button>
        <button class="cog" aria-label="Options"><svg viewBox="0 0 14 14"><circle cx="7" cy="7" r="4" stroke="#000" stroke-width="2"/><circle cx="7" cy="7" r="6" stroke="#000" stroke-width="2" stroke-dasharray="2.300 2.400"/></svg></button>
      </div>

      <div class="float behind"><div class="cap"></div></div>
      <div class="float keyframe">
        <div class="cap"><h2>Keyframe Animation</h2><button aria-label="Close">×</button></div>
        <div class="strip">
          <button aria-label="Play"><svg viewBox="0 0 24 24"><path d="M2.500 1l19 11.500-19 11z" fill="#2f74e0" stroke="#1f5bd0"/><path d="M3 2l9 6-9 9z" fill="#5b97ee" stroke="none"/></svg></button>
          <button aria-label="Record"><svg viewBox="0 0 24 24"><circle cx="12" cy="12" r="10.500" fill="#fff" stroke="#555" stroke-width="2.500"/><circle cx="12" cy="12" r="4.500" fill="#e3000b" stroke="none"/></svg></button>
          <button aria-label="Bounds"><svg viewBox="0 0 24 24"><path d="M2 2h20v20H2z" stroke="#3f4dbd" stroke-width="1.500" stroke-dasharray="4 3"/><path fill="#3f4dbd" d="M0 0h5v5H0zM19 0h5v5h-5zM0 19h5v5H0zM19 19h5v5h-5z"/></svg></button>
          <button aria-label="Clear"><svg viewBox="0 0 24 24"><circle cx="12" cy="12" r="10.500" fill="#909090" stroke="#777"/><path d="M8 8l8 8M16 8l-8 8" stroke="#fff" stroke-width="3"/></svg></button>
          <button aria-label="Timing"><svg viewBox="0 0 24 24"><g stroke="#3f4dbd" stroke-width="3"><circle cx="11" cy="14" r="8.500"/><path d="M7 2h8M11 2v4M19 4l3 3M11 14l5-5"/></g></svg></button>
          <button aria-label="Film"><svg viewBox="0 0 24 24"><path d="M0 1l24 2v21L0 20z" fill="#222"/><path d="M0 4l12 1v14L0 17zM13 5l11 1v15l-11-2z" fill="#2599dc"/><path d="M1 2l23 2M1 19l23 3" stroke="#eee" stroke-width="2" stroke-dasharray="2 1"/></svg></button>
          <button aria-label="Help"><svg viewBox="0 0 24 24"><circle cx="12" cy="12" r="11" fill="#fff" stroke="#aaa"/><circle cx="12" cy="12" r="8" fill="#1b70ce"/><text class="q" x="12" y="17">?</text></svg></button>
        </div>
      </div>
      <div class="float mini">
        <div class="cap"><h2>...</h2><button aria-label="Close">×</button></div>
        <button class="one" aria-label="Circle"><svg viewBox="0 0 24 26"><circle cx="10" cy="13" r="8" stroke="#174b76" stroke-width="2"/><path class="nf" d="M2 0l6 3-6 3zM2 20l6 3-6 3zM19 10l5 3-5 3z"/></svg></button>
      </div>
      <div class="float corner">
        <div class="cap"><h2>...</h2><button aria-label="Close">×</button></div>
        <button class="one" aria-label="Record box"><svg viewBox="0 0 24 26"><rect x="3" y="1" width="13" height="14" stroke="#e66" stroke-width="1.500"/><circle class="rf0" cx="11" cy="7" r="2"/></svg></button>
      </div>
    </div>
  </section>
</main>
</body>
</html>
```
FILE: styles.css
```css
* { box-sizing: border-box; }
body {
  margin: 0;
  height: 100vh;
  display: flex;
  flex-direction: column;
  overflow: hidden;
  background: #f0f0f5;
  color: #3a3a42;
  font: 12px/20px "Open Sans", "Noto Sans", sans-serif;
}
button {
  margin: 0;
  padding: 0;
  border: 0;
  background: none;
  color: inherit;
  font: inherit;
  display: flex;
  align-items: center;
  justify-content: center;
}
svg { fill: none; display: block; overflow: visible; }
h1, h2 { margin: 0; font-size: 12px; }

.titlebar { display: flex; align-items: center; gap: 5px; height: 23px; padding-left: 2px; background: #fff; flex: none; }
.titlebar h1 { font: 12px/20px "Noto Sans", sans-serif; font-weight: 400; color: #000; }
.logo { width: 16px; height: 16px; }
.menubar { display: flex; gap: 14px; height: 23px; padding-left: 10px; flex: none; border-bottom: 2px solid #e0e0e9; }
.menubar a { color: #333; text-decoration: none; line-height: 22px; }

.row { display: flex; height: 36px; flex: none; overflow: hidden; }
.row.second { height: 35px; padding-left: 40px; }
.bar { display: flex; flex: none; align-items: center; padding-right: 1px; border-right: 2px solid #e0e0e9; border-bottom: 2px solid #e0e0e9; }
.second .bar { border-bottom: 0; }
.bar button { width: 32px; height: 32px; }
.bar svg { width: 24px; height: 24px; flex: none; }
.bar .big svg { width: 28px; height: 28px; }
.bar .wide svg { width: 28px; }
.grip { width: 11px; height: 16px; flex: none; background: radial-gradient(circle, #bbb 0 1px, transparent 1px) 0 0 / 3px 3px content-box; padding: 0 5px 0 3px; }
.sep { width: 2px; height: 20px; margin: 0 2px; background: #a9a9ab; flex: none; }
.bar .active, .tools .active { border: 1px solid #2e7cb8; border-radius: 5px; background: #dbe9f6; }

.navy { stroke: #174b76; }
.navy .dim { stroke: #98989c; }
.ink { stroke: #000; }
.cube { stroke: #777; }
.edge { stroke: #554a3d; }
.w { fill: #fff; }
.s { fill: #999; stroke: none; }
.r { stroke: #f01010; }
.rf { fill: #f01010; }
.rf0 { fill: #f01010; stroke: none; }
.kf { fill: #000; stroke: none; }
.nf { fill: #174b76; stroke: none; }
.p { fill: #dcebf7; }
.c { stroke: #1c96d2; }
.c2 { stroke: #1c96d2; stroke-width: 1.5; }
.pc { fill: #dcebf7; stroke: #1c96d2; stroke-width: 1.5; }

.ab { font: 18px "Liberation Sans", sans-serif; color: #000; }
.dxf { font: bold 13px "Liberation Sans", sans-serif; color: #111; }
.abf { font: bold 13px "Liberation Sans", sans-serif; fill: #f01010; }
.cz { font: italic bold 24px "Liberation Serif", serif; fill: #10108a; }
.a1 { font: bold 10px "Liberation Serif", serif; fill: #174b76; stroke: none; }
.tiny { font: 7px "Liberation Sans", sans-serif; fill: #174b76; stroke: none; }
.q { font: bold 15px "Liberation Sans", sans-serif; fill: #fff; text-anchor: middle; }

.tagbox { position: relative; display: flex; align-items: center; width: 165px; height: 22px; padding-left: 7px; gap: 5px; background: #fff; border: 1px solid #b4b4bc; border-radius: 3px; }
.tagbox svg { width: 12px; height: 12px; }
.tagbox select { appearance: none; flex: 1; border: 0; padding: 0; background: none; color: #333; font: inherit; }
.caret { position: absolute; right: 7px; top: 8px; border: 4px solid transparent; border-top: 5px solid #777; border-bottom: 0; }

main { display: flex; flex: 1; min-height: 0; border-top: 1px solid #c6c6cc; }
.palette { width: 69px; flex: none; stroke: #174b76; }
.grip-h { display: block; width: 17px; height: 5px; margin: 2px 0 3px 27px; background: radial-gradient(circle, #bbb 0 1px, transparent 1px) 0 0 / 3px 3px; }
.tools { display: grid; grid-template-columns: 32px 32px; padding-left: 2px; border-right: 2px solid #e0e0e9; border-bottom: 2px solid #e0e0e9; }
.tools button { width: 32px; height: 32px; }
.tools svg { width: 22px; height: 22px; }
.tools .big svg { width: 25px; height: 25px; }
.rule { grid-column: 1 / 3; height: 2px; margin: 2px 7px 2px 6px; background: #9a9a9c; }

.workspace { flex: 1; min-width: 0; display: flex; flex-direction: column; }
.scenes { display: flex; align-items: flex-end; height: 31px; border-left: 2px solid #000; }
.find { width: 18px; height: 18px; margin: 0 22px 6px; }
.find svg { width: 18px; height: 18px; }
.tab { width: 90px; height: 27px; border: 1px solid #b2b2b8; border-bottom: 0; border-radius: 2px 2px 0 0; background: #dedee3; color: #4f4f58; }
.tab.current { width: 96px; height: 29px; background: #f6f6fa; }
.viewport { position: relative; flex: 1; background: #fff; overflow: hidden; }
.model { position: absolute; left: 571px; top: 51px; width: 450px; height: 680px; }

.legend { position: absolute; left: 28px; top: 20px; width: 160px; font: 10px/20px "DejaVu Sans Condensed", "DejaVu Sans", sans-serif; color: #69655a; }
.xray { display: flex; align-items: center; gap: 9px; font-weight: 700; }
.xray input { appearance: none; margin: 0; width: 14px; height: 14px; border: 1px solid #666; border-radius: 2px; background: #fff; }
.slider { position: relative; height: 16px; margin-top: 17px; }
.slider input { appearance: none; display: block; margin: 0; width: 158px; height: 16px; background: linear-gradient(#e0e0e0, #e0e0e0) 0 7px / 100% 2px no-repeat; }
.slider input::-webkit-slider-thumb { appearance: none; width: 16px; height: 16px; border: 1px solid #777; background: #e6e6e4; }
.slider output { position: absolute; left: 5px; top: 0; line-height: 16px; pointer-events: none; }
.legend ul { list-style: none; margin: 3px 0 0; padding: 0; }
.legend li { display: flex; align-items: center; height: 25px; }
.legend .picked { color: #000; font-weight: 700; }
.swatch { width: 38px; height: 14px; margin: 0 8px 0 4px; }
.swatch.red { width: 40px; height: 16px; margin-left: 2px; background: #eb1c51; }
.swatch.green { background: #c4d7c1; }
.swatch.pink { background: #f8a7bc; }

.modes { position: absolute; left: 690px; top: 15px; display: flex; gap: 80px; }
.modes button { width: 80px; height: 30px; background: #ebebeb; }
.modes .cog { width: 31px; border-radius: 2px; }
.cog svg { width: 14px; height: 14px; }
.dash { width: 24px; height: 19px; }
.shape { width: 24px; height: 18px; background: #fff; border: 1px solid #000; outline: 1px solid #bbb; outline-offset: -2px; }
.shape.square { width: 19px; border-color: #b80000; outline-color: #f3caca; }

.float { position: absolute; padding: 2px; background: #f0f0f5; border: 1px solid #d9d9e4; }
.cap { display: flex; align-items: center; justify-content: space-between; height: 20px; padding: 0 4px 0 3px; background: #9cb4d0; border: 1px solid #b0b0b8; }
.cap h2 { color: #464a55; }
.cap button { font-size: 16px; line-height: 16px; }
.behind { left: 1345px; top: 75px; width: 37px; height: 20px; }
.keyframe { left: 1207px; top: 82px; width: 229px; height: 58px; }
.strip { display: flex; height: 34px; align-items: center; }
.strip button { width: 32px; height: 32px; }
.strip svg { width: 24px; height: 24px; }
.mini { left: 1462px; top: 16px; width: 37px; height: 59px; }
.corner { left: 1479px; top: 760px; width: 37px; height: 59px; }
.one { width: 32px; height: 34px; }
.one svg { width: 24px; height: 26px; }
```
